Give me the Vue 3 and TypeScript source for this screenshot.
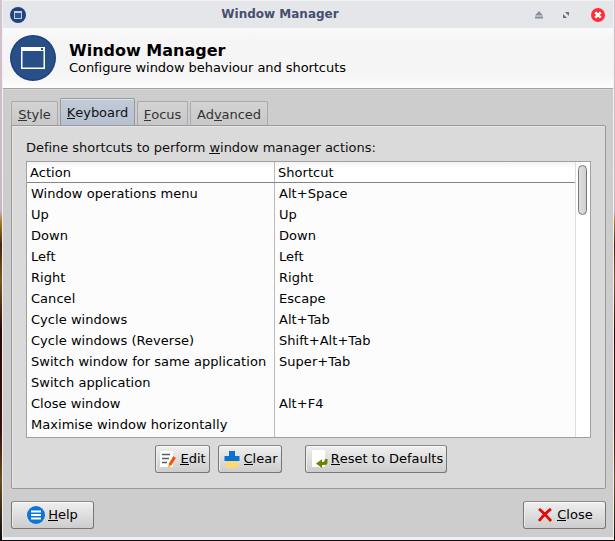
<script setup lang="ts">
interface Shortcut {
  action: string
  keys: string
}

const tabs = [
  { id: 'style', before: '', key: 'S', after: 'tyle' },
  { id: 'keyboard', before: '', key: 'K', after: 'eyboard' },
  { id: 'focus', before: '', key: 'F', after: 'ocus' },
  { id: 'advanced', before: 'Ad', key: 'v', after: 'anced' },
]
const activeTab = 'keyboard'

const shortcuts: Shortcut[] = [
  { action: 'Window operations menu', keys: 'Alt+Space' },
  { action: 'Up', keys: 'Up' },
  { action: 'Down', keys: 'Down' },
  { action: 'Left', keys: 'Left' },
  { action: 'Right', keys: 'Right' },
  { action: 'Cancel', keys: 'Escape' },
  { action: 'Cycle windows', keys: 'Alt+Tab' },
  { action: 'Cycle windows (Reverse)', keys: 'Shift+Alt+Tab' },
  { action: 'Switch window for same application', keys: 'Super+Tab' },
  { action: 'Switch application', keys: '' },
  { action: 'Close window', keys: 'Alt+F4' },
  { action: 'Maximise window horizontally', keys: '' },
]
</script>

<template>
  <div class="desktop">
    <div class="window">
      <header class="titlebar">
        <svg class="app-icon" width="16" height="16" viewBox="0 0 16 16">
          <circle cx="8" cy="8" r="8" fill="#1f4380" />
          <rect x="4.5" y="4.5" width="7" height="7" fill="#2f5590" stroke="#c5cddb" />
          <path d="M4 5.5h8" stroke="#c5cddb" />
        </svg>
        <span class="title">Window Manager</span>
        <div class="controls">
          <svg width="8" height="8" viewBox="0 0 8 8"><path d="M4 0L8 4.5H0zM0 5.5h8v2H0z" fill="#858da2" /></svg>
          <svg width="6" height="6" viewBox="0 0 6 6"><path d="M2 0h4v4zM0 2v4h4z" fill="#646c7c" /></svg>
          <svg width="14" height="14" viewBox="0 0 14 14">
            <circle cx="7" cy="7" r="7" fill="#fb3038" />
            <path d="M4.3 4.3l5.4 5.4M9.7 4.3L4.3 9.7" stroke="#fff" stroke-width="2.5" />
          </svg>
        </div>
      </header>

      <section class="banner">
        <svg width="46" height="46" viewBox="0 0 46 46">
          <circle cx="23" cy="23" r="23" fill="#1c427f" />
          <circle cx="23" cy="23" r="21.5" fill="#284f88" />
          <rect x="11.75" y="12.75" width="22.5" height="20.5" fill="none" stroke="#fff" stroke-width="1.5" />
          <path d="M11 14.5h24" stroke="#fff" stroke-width="3" />
          <path d="M31 14h2" stroke="#284f88" stroke-width="2" />
        </svg>
        <div class="banner-text">
          <h1>Window Manager</h1>
          <p>Configure window behaviour and shortcuts</p>
        </div>
      </section>

      <main class="body">
        <nav class="tabs">
          <div v-for="t in tabs" :key="t.id" class="tab" :class="[t.id, { active: t.id === activeTab }]">
            <span>{{ t.before }}<u>{{ t.key }}</u>{{ t.after }}</span>
          </div>
        </nav>

        <section class="pane">
          <p class="caption">Define shortcuts to perform <u>w</u>indow manager actions:</p>
          <div class="list">
            <div class="grid">
              <div class="row head"><span>Action</span><span>Shortcut</span></div>
              <div v-for="s in shortcuts" :key="s.action" class="row">
                <span>{{ s.action }}</span><span>{{ s.keys }}</span>
              </div>
            </div>
            <div class="scrollbar"><div class="thumb"></div></div>
          </div>
          <div class="actions">
            <button class="btn edit">
              <svg width="18" height="18" viewBox="0 0 18 18">
                <path d="M1 1h13v16H1z" fill="#fff" />
                <path d="M3 4.5h8M3 8.5h7M3 12.5h5" stroke="#555e65" stroke-width="1.6" />
                <path d="M15.6 7L10.8 15" stroke="#fb4b08" stroke-width="3" />
                <path d="M9.5 14.2l2.6 1.6-2.9 2.1z" fill="#f7ad17" />
              </svg>
              <span><u>E</u>dit</span>
            </button>
            <button class="btn clear">
              <svg width="18" height="18" viewBox="0 0 18 18">
                <path d="M6 1h6v5h4.5v5h-15V6H6z" fill="#0b70d5" />
                <path d="M3 11h12v7h-2l-.5-3-1 3H3z" fill="#fbda70" />
              </svg>
              <span><u>C</u>lear</span>
            </button>
            <button class="btn reset">
              <svg width="18" height="18" viewBox="0 0 18 18">
                <path d="M2 0h13v17H2z" fill="#fff" />
                <path d="M17.5 9v3.5q0 2.5-3 2.5h-2.5v3L6 13.5 12 9.2V12h1q1.8 0 1.8-3z" fill="#688500" />
              </svg>
              <span><u>R</u>eset to Defaults</span>
            </button>
          </div>
        </section>

        <footer class="footer">
          <button class="btn help">
            <svg width="18" height="18" viewBox="0 0 18 18">
              <circle cx="9" cy="9" r="9" fill="#0b76d8" />
              <path d="M4 5.5h10M4 9h10M4 12.5h10" stroke="#fff" stroke-width="1.8" />
            </svg>
            <span><u>H</u>elp</span>
          </button>
          <button class="btn close">
            <svg width="14" height="14" viewBox="0 0 14 14">
              <path d="M1 1q5 4 12 12M13 1Q7 5 1 13" fill="none" stroke="#e10b0b" stroke-width="2.8" />
            </svg>
            <span><u>C</u>lose</span>
          </button>
        </footer>
      </main>
    </div>
  </div>
</template>

<style>
body { margin: 0; overflow: hidden; }
</style>

<style scoped>
* { box-sizing: border-box; }
.desktop {
  width: 615px; height: 541px; padding: 0 1px 1px 2px;
  background: linear-gradient(#d5c3cd 0, #c9b8c2 210px, #a77b28 222px, #4a230b 245px, #7b5920 280px, #2a0905 330px, #3a1208 430px, #67501f 480px, #120b08 541px);
  font: 13px/16px "DejaVu Sans", sans-serif; color: #000;
}
.window {
  height: 540px; border: solid #eff0f8; border-width: 0 1px 3px;
  display: flex; flex-direction: column; background: #cdcdcd;
}
u { text-decoration: none; border-bottom: 1px solid currentColor; display: inline-block; line-height: 11px; }
.titlebar {
  height: 28px; flex: none; display: grid; grid-template-columns: 16px 1fr 90px; align-items: center;
  background: #e5e6ea; border-top: 1px solid #f2f3f5; padding-left: 7px;
}
.title { text-align: center; font: bold 12px/16px "DejaVu Sans", sans-serif; color: #46506e; padding: 0 0 2px 11px; }
.controls { display: flex; justify-content: flex-end; align-items: center; padding-right: 8px; }
.controls svg:nth-child(1) { margin-right: 20px; }
.controls svg:nth-child(2) { margin-right: 22px; }
.banner {
  height: 61px; flex: none; display: flex; align-items: center; gap: 13px; padding: 0 7px;
  background: linear-gradient(#fafafa, #f5f5f5 12px, #f5f5f5 48px, #fdfdfd); border-bottom: 1px solid #a3a3a3;
}
.banner h1 { margin: 0; font: bold 16px/19px "DejaVu Sans", sans-serif; }
.banner p { margin: 0; line-height: 16px; letter-spacing: -0.06px; }
.body { flex: 1; padding: 8px 7px 8px 8px; display: flex; flex-direction: column; border-top: 1px solid #d7d7d7; }
.tabs { display: flex; align-items: flex-end; height: 27px; letter-spacing: -0.05px; }
.tab {
  height: 24px; border: 1px solid #aaa; border-bottom: 0; border-radius: 2px 2px 0 0; margin-right: 2px;
  background: linear-gradient(#d3d3d3, #c8c8c8); color: #333; text-align: center; padding-top: 5px;
}
.tab.style { width: 47px; }
.tab.keyboard { width: 75px; }
.tab.focus { width: 51px; }
.tab.advanced { width: 78px; }
.tab.active { height: 27px; padding-top: 6px; background: linear-gradient(#c1cad7, #b6c1d1); border-color: #999; box-shadow: inset 0 1px #dce2ea; color: #111; }
.pane {
  height: 364px; flex: none; border: 1px solid #999; border-radius: 0 2px 2px 2px;
  background: #dadada; box-shadow: inset 1px 1px #e6e6e6; padding: 13px 14px 0;
}
.caption { margin: 0; height: 22px; line-height: 18px; color: #111; letter-spacing: -0.04px; }
.list { height: 277px; border: 1px solid #a0a0a0; background: #fcfcfc; display: flex; overflow: hidden; letter-spacing: 0.04px; }
.grid { flex: 1; }
.row { display: grid; grid-template-columns: 248px 1fr; height: 21px; line-height: 21px; white-space: nowrap; }
.row span { padding-left: 4px; }
.row span:first-child { border-right: 1px solid #bbb; }
.row:last-child { height: 23px; }
.row.head { border-bottom: 1px solid #858585; background: linear-gradient(#f4f4f4, #fff 7px); }
.row.head span { height: 20px; padding-left: 3px; line-height: 22px; }
.scrollbar { width: 15px; border-left: 1px solid #ddd; background: #fff; padding: 3px 3px 0 2px; }
.thumb { width: 9px; height: 50px; border: 1px solid #777; border-radius: 5px; background: linear-gradient(90deg, #e0e0e0, #cfcfcf); }
.actions { display: flex; padding: 7px 0 0 129px; }
.btn {
  height: 28px; border: 1px solid #777; border-top-color: #8a8a8a; border-radius: 3px; padding: 0; margin: 0;
  background: linear-gradient(#efefef, #dedede 50%, #cdcdcd); box-shadow: inset 0 1px #fafafa, inset 1px 0 #eee;
  font: inherit; color: #000; display: flex; align-items: center; justify-content: center; white-space: nowrap; flex: none;
}
.edit { width: 55px; margin-right: 8px; gap: 3px; }
.clear { width: 64px; margin-right: 23px; gap: 3px; }
.reset { width: 142px; gap: 3px; padding-left: 1px; }
.footer { display: flex; justify-content: space-between; margin-top: 12px; }
.help { width: 83px; gap: 3px; }
.close { width: 83px; gap: 5px; padding-left: 2px; }
</style>
